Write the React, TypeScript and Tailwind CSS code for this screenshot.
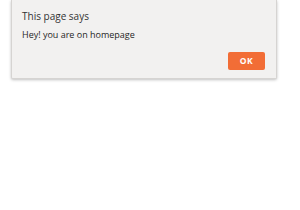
export default function App() {
  return (
    <div className="w-[300px] h-[210px] bg-white overflow-hidden" style={{ fontFamily: '"Open Sans", "Noto Sans", sans-serif' }}>
      <div className="ml-[11px] w-[266px] h-[79px] bg-[#f2f1f0] border border-[#d6d4d2] border-t-0 shadow-[0_1px_3px_rgba(0,0,0,0.25)] rounded-b-[2px] flex flex-col pl-[10px] pr-[11px]">
        <div className="mt-[9px] text-[10px] leading-[14px] text-[#333333]">This page says</div>
        <div className="mt-[5px] text-[9px] leading-[13px] text-[#262626]">Hey! you are on homepage</div>
        <div className="flex justify-end mt-[11px]">
          <button className="w-[37px] h-[18px] bg-[#f26d36] rounded-[2px] text-white text-[8.5px] font-bold tracking-[0.5px] flex items-center justify-center">OK</button>
        </div>
      </div>
    </div>
  );
}
